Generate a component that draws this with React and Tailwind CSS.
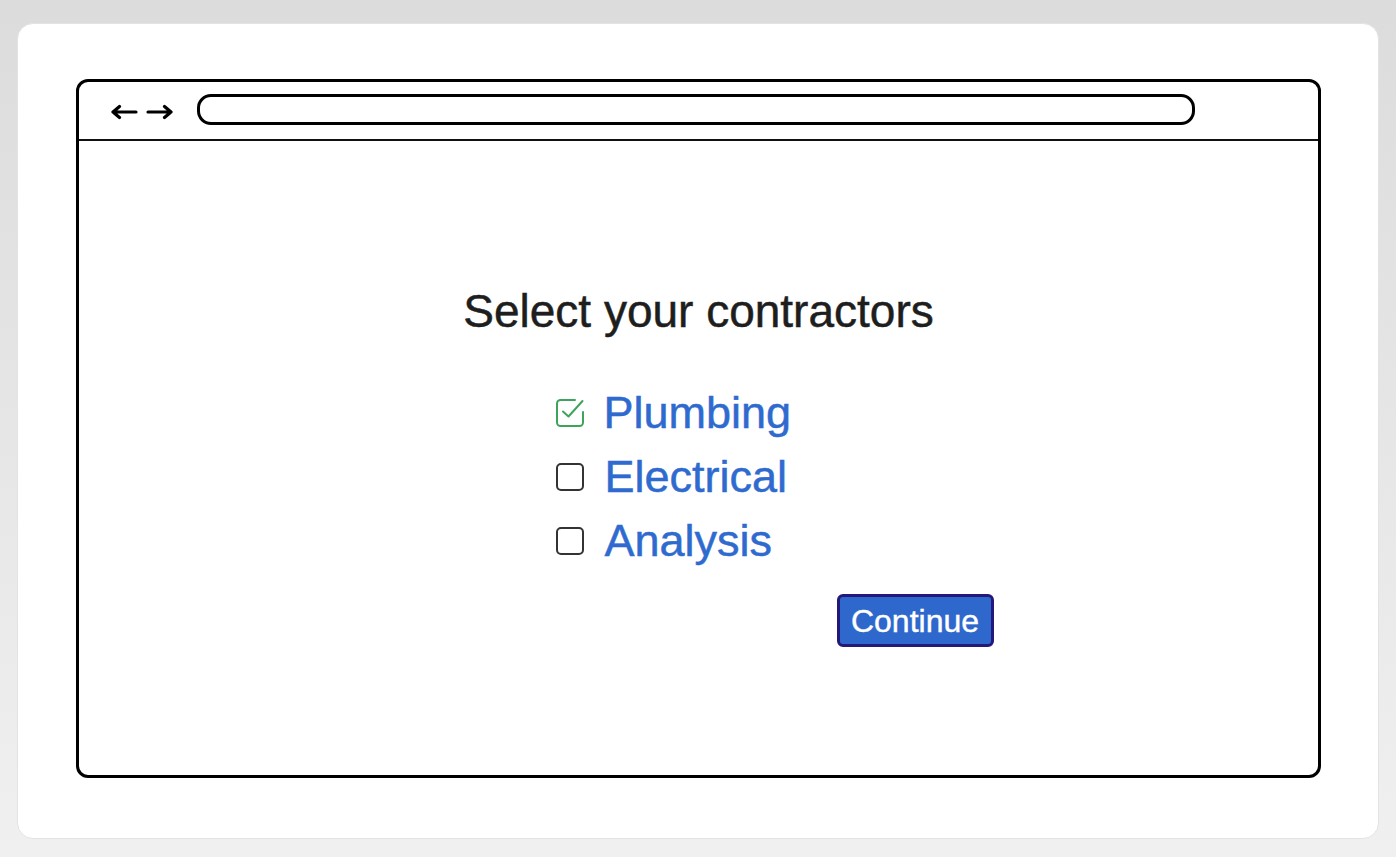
import React from "react";

const items = [
  { label: "Plumbing", checked: true },
  { label: "Electrical", checked: false },
  { label: "Analysis", checked: false },
];

function CheckedBox() {
  return (
    <svg width="30" height="30" viewBox="0 0 30 30" fill="none" className="shrink-0 -ml-[1px]">
      <path
        d="M28 14v10.5a3.5 3.5 0 0 1-3.5 3.5h-19A3.5 3.5 0 0 1 2 24.5v-19A3.5 3.5 0 0 1 5.5 2H20"
        stroke="#3fa45b"
        strokeWidth="2"
        strokeLinecap="round"
        strokeLinejoin="round"
      />
      <path d="M8 13.5l5.5 5L27.5 3" stroke="#3fa45b" strokeWidth="2" strokeLinecap="round" strokeLinejoin="round" />
    </svg>
  );
}

function Arrows() {
  return (
    <svg width="62" height="18" viewBox="0 0 62 18" fill="none" className="shrink-0">
      <path d="M2 9h23M8.5 3.5L2 9l6.5 5.5" stroke="#000" strokeWidth="3.2" strokeLinecap="round" strokeLinejoin="round" />
      <path d="M37 9h23M53.5 3.5L60 9l-6.5 5.5" stroke="#000" strokeWidth="3.2" strokeLinecap="round" strokeLinejoin="round" />
    </svg>
  );
}

export default function App() {
  return (
    <div
      className="w-[1396px] h-[857px] bg-gradient-to-b from-[#dcdcdc] to-[#f0f0f0] pt-[23px] pb-[18px] px-[17px]"
      style={{ fontFamily: '"Liberation Sans", Arial, sans-serif' }}
    >
      <div className="h-full bg-white rounded-[16px] border border-[#e3e3e3] pt-[55px] pb-[60px] pl-[58px] pr-[57px]">
        {/* Browser window */}
        <div className="h-full border-[3px] border-black rounded-[12px] flex flex-col">
          <div className="h-[59px] border-b-2 border-[#111] flex items-center pl-[32px] pr-[123px] shrink-0">
            <div className="pt-[2px]">
              <Arrows />
            </div>
            <div className="ml-[24px] flex-1 h-[31px] -mt-[2px] border-[3px] border-black rounded-[14px]" />
          </div>

          <div className="flex-1 flex flex-col items-center pt-[147px]">
            <h1 className="text-[46px] leading-none text-[#1e1e1e] [-webkit-text-stroke:0.5px_#1e1e1e]">
              Select your contractors
            </h1>

            <div className="w-[286px] mt-[47px] flex flex-col">
              {items.map((it) => (
                <div key={it.label} className="h-[64px] flex items-center">
                  {it.checked ? (
                    <CheckedBox />
                  ) : (
                    <span className="w-[28px] h-[28px] border-2 border-[#333] rounded-[5px] shrink-0" />
                  )}
                  <span
                    className={`${it.checked ? "ml-[19px]" : "ml-[21px]"} text-[45px] leading-[64px] text-[#2f6bcf] [-webkit-text-stroke:0.5px_#2f6bcf] whitespace-nowrap`}
                  >
                    {it.label}
                  </span>
                </div>
              ))}

              <button className="mt-[21px] ml-[281px] shrink-0 w-[157px] h-[53px] bg-[#2f68cd] border-[3px] border-[#24197a] rounded-[6px] text-white text-[32px] leading-none flex items-center justify-center [-webkit-text-stroke:0.4px_#ffffff]">
                Continue
              </button>
            </div>
          </div>
        </div>
      </div>
    </div>
  );
}
